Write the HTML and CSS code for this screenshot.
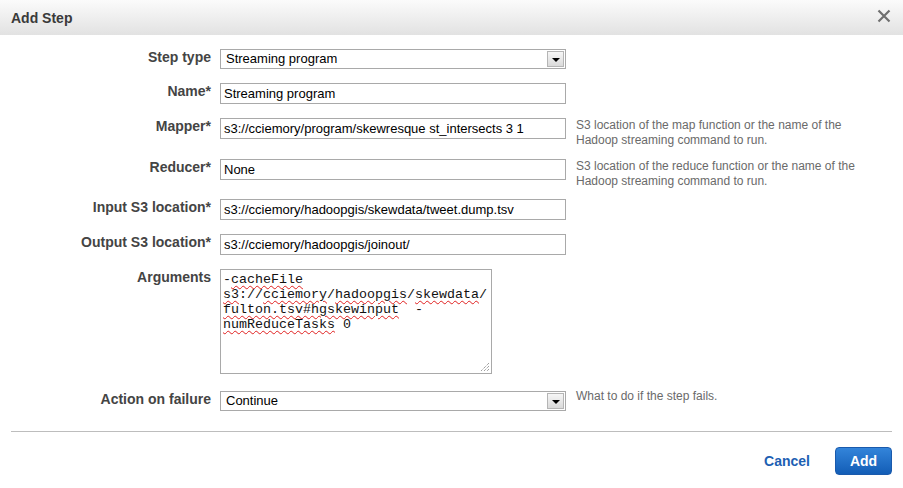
FILE: index.html
```html
<!DOCTYPE html>
<html>
<head>
<meta charset="utf-8">
<link rel="stylesheet" href="styles.css">
</head>
<body>
<div class="dialog">
  <div class="header">
    <div class="title">Add Step</div>
    <svg class="close" width="14" height="14" viewBox="0 0 14 14"><path d="M1.5 1.5 L12.5 12.5 M12.5 1.5 L1.5 12.5" stroke="#6f6f6f" stroke-width="2.2" fill="none"/></svg>
  </div>
  <div class="body">
    <div class="row r-step">
      <div class="label">Step type</div>
      <div class="select"><span class="sel-text">Streaming program</span><span class="sel-btn"><span class="tri"></span></span></div>
    </div>
    <div class="row">
      <div class="label">Name*</div>
      <div class="input">Streaming program</div>
    </div>
    <div class="row has-help r-mapper">
      <div class="label">Mapper*</div>
      <div class="input">s3://cciemory/program/skewresque st_intersects 3 1</div>
      <div class="help">S3 location of the map function or the name of the<br>Hadoop streaming command to run.</div>
    </div>
    <div class="row has-help">
      <div class="label">Reducer*</div>
      <div class="input">None</div>
      <div class="help">S3 location of the reduce function or the name of the<br>Hadoop streaming command to run.</div>
    </div>
    <div class="row">
      <div class="label">Input S3 location*</div>
      <div class="input">s3://cciemory/hadoopgis/skewdata/tweet.dump.tsv</div>
    </div>
    <div class="row">
      <div class="label">Output S3 location*</div>
      <div class="input">s3://cciemory/hadoopgis/joinout/</div>
    </div>
    <div class="row r-args">
      <div class="label">Arguments</div>
      <div class="textarea"><div class="ta-text">-<span class="sp">cacheFile</span>
<span class="sp">s3</span>://<span class="sp">cciemory</span>/<span class="sp">hadoopgis</span>/<span class="sp">skewdata</span>/
<span class="sp">fulton.tsv#hgskewinput</span>  -
<span class="sp">numReduceTasks</span> 0</div>
        <svg class="grip" width="10" height="10" viewBox="0 0 10 10"><path d="M9 1 L1 9 M9 4 L4 9 M9 7 L7 9" stroke="#777" stroke-width="1" stroke-dasharray="1 1" fill="none"/></svg>
      </div>
    </div>
    <div class="row r-action">
      <div class="label">Action on failure</div>
      <div class="select"><span class="sel-text">Continue</span><span class="sel-btn"><span class="tri"></span></span></div>
      <div class="help help-one">What to do if the step fails.</div>
    </div>
  </div>
  <div class="footer">
    <a class="cancel">Cancel</a>
    <button class="add">Add</button>
  </div>
</div>
</body>
</html>
```
FILE: styles.css
```css
html, body {
  margin: 0;
  padding: 0;
  background: #fff;
}
body {
  font-family: "Liberation Sans", Arial, sans-serif;
  width: 903px;
  height: 488px;
  overflow: hidden;
}
.dialog {
  width: 903px;
  height: 488px;
  background: #fff;
}
.header {
  height: 35px;
  background: linear-gradient(#fbfbfb, #e2e2e2);
  display: flex;
  align-items: center;
  justify-content: space-between;
  padding: 0 12px 0 11px;
}
.title {
  font-size: 14px;
  font-weight: bold;
  color: #3a3a3a;
}
.close {
  margin-top: -4px;
}
.body {
  padding: 14px 11px 0 11px;
}
.row {
  display: flex;
  align-items: flex-start;
  margin-bottom: 14px;
}
.row.has-help {
  margin-bottom: 10px;
}
.row.r-mapper {
  margin-bottom: 11px;
}
.r-args {
  margin-bottom: 17px;
}
.label {
  width: 200px;
  text-align: right;
  font-size: 14px;
  font-weight: bold;
  color: #444;
  padding-top: 0;
  margin-right: 9px;
  line-height: 16px;
}
.input {
  box-sizing: border-box;
  width: 346px;
  height: 21px;
  border: 1px solid #a9a9a9;
  font-size: 13px;
  color: #000;
  line-height: 19px;
  padding: 0 3px;
  white-space: nowrap;
  overflow: hidden;
}
.select {
  box-sizing: border-box;
  width: 346px;
  height: 20px;
  border: 1px solid #a9a9a9;
  display: flex;
  align-items: center;
  justify-content: space-between;
  font-size: 13px;
  color: #000;
  padding: 0 1px 0 5px;
}
.sel-text {
  line-height: 18px;
}
.sel-btn {
  box-sizing: border-box;
  width: 17px;
  height: 16px;
  border: 1px solid #b5b5b5;
  background: linear-gradient(#f6f6f6, #dadada);
  display: flex;
  align-items: center;
  justify-content: center;
}
.tri {
  width: 0;
  height: 0;
  border-left: 4px solid transparent;
  border-right: 4px solid transparent;
  border-top: 4px solid #000;
  margin-top: 1px;
}
.help {
  margin-left: 10px;
  font-size: 12px;
  line-height: 15px;
  color: #6a6a6a;
}
.help-one {
  margin-top: -2px;
}
.textarea {
  box-sizing: border-box;
  width: 272px;
  height: 105px;
  border: 1px solid #a9a9a9;
  padding: 2px;
  display: flex;
  flex-direction: column;
  justify-content: space-between;
}
.ta-text {
  font-family: "Liberation Mono", "Courier New", monospace;
  font-size: 13.33px;
  line-height: 15px;
  color: #111;
  white-space: pre;
}
.sp {
  text-decoration: underline wavy #e02020;
  text-decoration-thickness: 1px;
  text-underline-offset: 2px;
}
.grip {
  align-self: flex-end;
  margin: 0 -1px -1px 0;
}
.footer {
  margin: 20px 11px 0 11px;
  border-top: 1px solid #bdbdbd;
  padding-top: 15px;
  display: flex;
  justify-content: flex-end;
  align-items: center;
}
.cancel {
  font-size: 14px;
  font-weight: bold;
  color: #1d5fb3;
  margin-right: 25px;
  cursor: pointer;
}
.add {
  box-sizing: border-box;
  width: 57px;
  height: 28px;
  border: 1px solid #1a5aac;
  border-radius: 4px;
  background: linear-gradient(#3384da, #135db6);
  color: #fff;
  font-family: "Liberation Sans", Arial, sans-serif;
  font-size: 14px;
  font-weight: bold;
  padding: 0;
}
```
